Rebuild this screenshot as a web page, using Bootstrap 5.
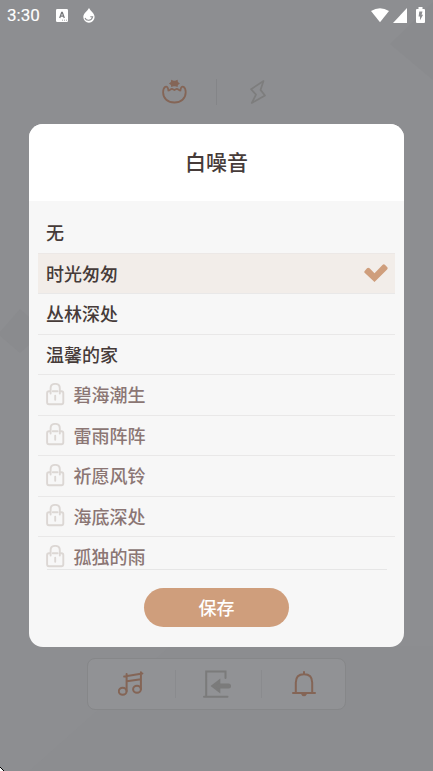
<!DOCTYPE html>
<html lang="zh-CN">
<head>
<meta charset="utf-8">
<meta name="viewport" content="width=device-width, initial-scale=1">
<title>白噪音</title>
<link href="https://cdn.jsdelivr.net/npm/bootstrap@5.3.0/dist/css/bootstrap.min.css" rel="stylesheet">
<style>
body{font-family:"Noto Sans CJK SC",sans-serif;background:#8d8e91;color:#463b39}
svg{display:block;flex:none}
.screen{width:433px;height:771px;isolation:isolate}
.backdrop-art{z-index:-1}
.status{height:30px;padding:0 8px 0 7px;font:400 17px/30px Roboto,sans-serif;-webkit-text-stroke:.15px}
.status .drop{margin-left:15px}
.status .cell{margin-left:4px}
.status .battery{margin-left:9px}
.modes{height:94px;padding:49px 4px 0 0}
.mode-split{width:1px;height:26px;background:#848588;margin:0 32px 0 28px}
.sheet{width:375px;height:523px;border-radius:14px;background:#f7f7f7}
.sheet-title{height:77px;font-size:21px;line-height:74px;font-weight:500}
.sounds{width:357px;height:356px;margin-top:12px}
.sounds .sound{height:40.5px;padding:0 7px 0 8px;background:transparent;border:0;border-bottom:1px solid #e9e8e8;border-radius:0;color:#463b39;font-size:18px;line-height:38px;font-weight:500;flex:none}
.sounds .chosen,.sounds .locked{padding-bottom:1px}
.sounds .chosen{background:#f2ede9;box-shadow:0 -1px #ece8e6}
.sounds .locked{color:#8b7674;gap:8.5px}
.list-end{width:340px;height:1px;background:#e6e6e6}
.save{width:145px;height:39px;margin-top:18px;padding:0;background:#cf9e7c!important;color:#fff!important;border:0;font-size:18px;line-height:39px;font-weight:500}
.tools{width:259px;height:52px;margin-top:11px;background:#919295;border:1px solid #868789;border-radius:8px}
.tool{flex:none;width:87px}
.tool.exit{width:85px;padding-right:3px}
.tool.alarm{width:83px}
.tool-split{width:1px;height:28px;background:#8a8b8e}
</style>
<script src="https://cdn.jsdelivr.net/npm/bootstrap@5.3.0/dist/js/bootstrap.bundle.min.js"></script>
</head>
<body class="m-0 overflow-hidden">
<svg width="0" height="0" class="position-absolute" aria-hidden="true">
  <symbol id="lock" viewBox="0 0 19 23"><g fill="none" stroke="#dcd7d4" stroke-width="1.900" stroke-linecap="round"><path d="M4 8.200H3Q1.100 8.200 1.100 10v9.300q0 1.900 1.900 1.900h12.400q1.900 0 1.900-1.900V10q0-1.800-1.900-1.800h-1M6.800 8.200h4.800"/><path d="M4.600 10.500V5.200q0-4.300 4.600-4.300t4.600 4.300v5.300M9.200 12.800v4"/></g></symbol>
</svg>
<main class="screen position-relative d-flex flex-column align-items-center">
  <svg class="backdrop-art position-absolute top-0 start-0" width="433" height="771"><g fill="#8a8b8e"><path d="M390 44 433 2v78z"/><path d="M-2 334 20 309 45 331 20 353z"/></g><path d="M29 771 170 646H433V771z" fill="#8c8d90"/><path d="M0 768h1v1h1v1h1v1H0z" fill="#fff"/><path d="M0 767h1v1H0zM1 768h1v1H1zM2 769h1v1H2zM3 770h1v1H3z" fill="#000"/></svg>
  <header class="status w-100 d-flex align-items-center text-white">
    <span>3:30</span>
    <svg class="ms-3" width="12" height="13" viewBox="0 0 12 13"><rect width="12" height="13" rx="1.200" fill="#fff"/><path d="M3.700 9 5.700 3.300h.6L8.300 9M4.600 7.200h2.800" fill="none" stroke="#77787b" stroke-width="1.300"/><path d="M6 11.200h1M8 11.200h1M10 11.200h1" stroke="#8d8e91" stroke-width=".8"/></svg>
    <svg class="drop" width="12" height="15" viewBox="0 0 12 15"><path d="M6 0C4.500 3 .3 5.400.3 9A5.600 5.600 0 0 0 11.600 9C11.600 5.400 7.500 3 6 0z" fill="#fff"/><path d="M2 10c1.200 3.200 6.500 3.200 7.600-1.200H7.300" fill="none" stroke="#8d8e91" stroke-width="1.100"/></svg>
    <svg class="ms-auto" width="18" height="15" viewBox="0 0 18 15"><path d="M0 3Q9-2.500 18 3L9 14.200z" fill="#fff"/></svg>
    <svg class="cell" width="14" height="15" viewBox="0 0 14 15"><path d="M14 0v15H0z" fill="#fff"/></svg>
    <svg class="battery" width="9" height="17" viewBox="0 0 9 17"><path d="M2.500 0h4v2H8q1 0 1 1v12q0 1-1 1H1q-1 0-1-1V3q0-1 1-1h1.500z" fill="#fff"/><path d="M3.300 4.500h3.200L5.600 7.700h1.500L4 13.300V9.500H2.600z" fill="#8d8e91"/></svg>
  </header>
  <nav class="modes d-flex justify-content-center">
    <svg width="26" height="26" viewBox="0 0 26 26"><path d="M3.300 7.800C4.800 7.200 6 7.900 6.400 11.500 8 12 8.500 9.600 10 9.800l2.400 1.300 2.400-1.300c1.500-.2 2 2.200 3.600 1.700.4-3.600 1.600-4.300 3.100-3.700 1.500 1 2.200 3 2.200 5.500C23.700 19.500 19 23.500 12.400 23.500S1.100 19.500 1.100 13.300c0-2.500.7-4.500 2.200-5.500z" fill="none" stroke="#846556" stroke-width="1.800"/><path d="m9.200.8 2.400 1h1.600l2.400-1 .3 2.200 2 1.500-2 1.500-.3 2-2.400-.8h-1.600l-2.400.8-.3-2-2-1.500 2-1.500z" fill="#846556"/></svg>
    <div class="mode-split"></div>
    <svg width="18" height="27" viewBox="0 0 18 27"><path d="M14.500 2 2 10.200l5 5.400L2.800 24 16 16.500l-4.500-5.600z" fill="none" stroke="#7d7d7d" stroke-width="1.700" stroke-linejoin="round"/></svg>
  </nav>
  <section class="sheet overflow-hidden d-flex flex-column align-items-center">
    <h1 class="sheet-title w-100 m-0 text-center bg-white">白噪音</h1>
    <div class="sounds list-group overflow-hidden rounded-0">
      <div class="list-group-item sound">无</div>
      <div class="list-group-item sound chosen d-flex align-items-center justify-content-between">时光匆匆<svg width="24" height="18" viewBox="0 0 24 18"><path d="M.7 6.900 3 4.200q1.300-1 2.600.1l4.900 4.900L18.700.8q1.200-1 2.400.2l2.200 2.300q.8 1.100-.2 2.200L10.500 18 .6 8.800q-.7-.9.100-1.900z" fill="#cf9e7c"/></svg></div>
      <div class="list-group-item sound">丛林深处</div>
      <div class="list-group-item sound">温馨的家</div>
      <div class="list-group-item sound locked d-flex align-items-center"><svg width="19" height="23"><use href="#lock"/></svg>碧海潮生</div>
      <div class="list-group-item sound locked d-flex align-items-center"><svg width="19" height="23"><use href="#lock"/></svg>雷雨阵阵</div>
      <div class="list-group-item sound locked d-flex align-items-center"><svg width="19" height="23"><use href="#lock"/></svg>祈愿风铃</div>
      <div class="list-group-item sound locked d-flex align-items-center"><svg width="19" height="23"><use href="#lock"/></svg>海底深处</div>
      <div class="list-group-item sound locked d-flex align-items-center"><svg width="19" height="23"><use href="#lock"/></svg>孤独的雨</div>
    </div>
    <div class="list-end"></div>
    <button class="btn save rounded-pill" type="button">保存</button>
  </section>
  <nav class="tools d-flex align-items-center">
    <div class="tool d-flex justify-content-center"><svg width="28" height="28" viewBox="0 0 28 28"><g fill="none" stroke="#846556" stroke-width="2" stroke-linecap="round"><ellipse cx="4.700" cy="21.200" rx="3.900" ry="3.500"/><ellipse cx="19" cy="19.300" rx="3.900" ry="3.500"/><path d="M8.600 21V4M22.900 19V2.200M6.200 6.500 24.400 3.500M8.900 11.300l14-2"/></g></svg></div>
    <div class="tool-split"></div>
    <div class="tool exit d-flex justify-content-center"><svg width="28" height="28" viewBox="0 0 28 28"><path d="M22.500 8V1.500H3.200v25M1 26.700h23.500" fill="none" stroke="#7b7b7b" stroke-width="2" stroke-linecap="round"/><path d="M7.500 16 17.300 8.500v15z" fill="#7b7b7b"/><path d="M16 16h9.500" stroke="#7b7b7b" stroke-width="5" stroke-linecap="round"/></svg></div>
    <div class="tool-split"></div>
    <div class="tool alarm d-flex justify-content-center"><svg width="26" height="26" viewBox="0 0 26 26"><path d="M4.800 22V11.500q0-8.300 8.200-8.300t8.200 8.300V22M13 1v2M2 22h22" fill="none" stroke="#846556" stroke-width="2" stroke-linecap="round"/><path d="M9.700 22.500h6.600Q15 25.300 13 25.300t-3.300-2.800z" fill="#846556"/></svg></div>
  </nav>
</main>
</body>
</html>
